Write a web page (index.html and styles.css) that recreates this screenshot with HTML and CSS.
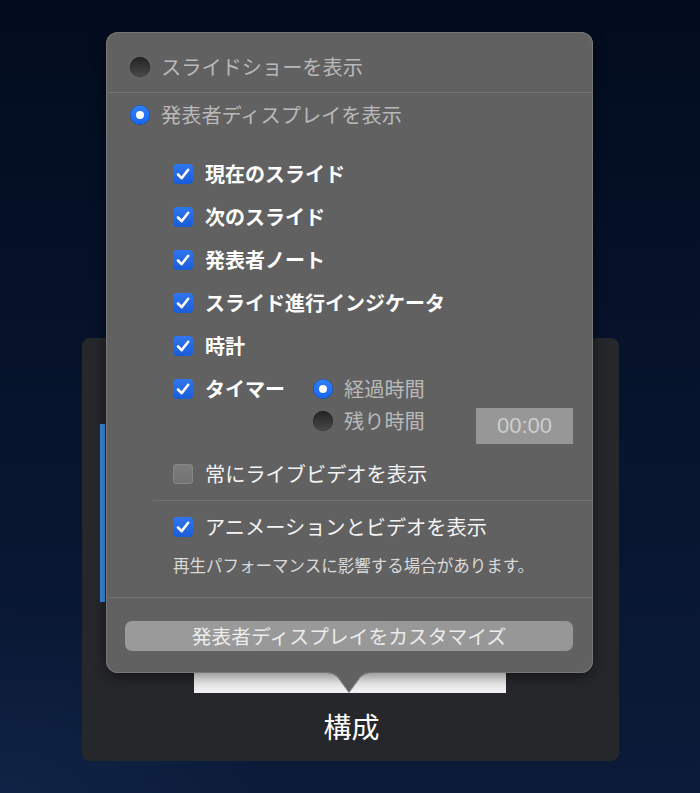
FILE: index.html
```html
<!DOCTYPE html>
<html lang="ja">
<head>
<meta charset="utf-8">
<title>発表者ディスプレイ</title>
<link rel="stylesheet" href="styles.css">
</head>
<body>
<div class="stage">
  <div class="panel">
    <div class="accent"></div>
    <div class="thumb"></div>
    <div class="caption">構成</div>
  </div>

  <div class="popover">
    <div class="sec-top">
      <div class="row radio-row">
        <span class="radio"></span><span class="lbl dim">スライドショーを表示</span>
      </div>
    </div>
    <div class="row radio-row row2">
      <span class="radio on"></span><span class="lbl dim">発表者ディスプレイを表示</span>
    </div>

    <div class="group">
      <div class="row chk-row"><span class="chk on"><svg viewBox="0 0 20 20"><path d="M5 10.5 8.6 14.2 15.2 5.8"/></svg></span><span class="lbl bold">現在のスライド</span></div>
      <div class="row chk-row"><span class="chk on"><svg viewBox="0 0 20 20"><path d="M5 10.5 8.6 14.2 15.2 5.8"/></svg></span><span class="lbl bold">次のスライド</span></div>
      <div class="row chk-row"><span class="chk on"><svg viewBox="0 0 20 20"><path d="M5 10.5 8.6 14.2 15.2 5.8"/></svg></span><span class="lbl bold">発表者ノート</span></div>
      <div class="row chk-row"><span class="chk on"><svg viewBox="0 0 20 20"><path d="M5 10.5 8.6 14.2 15.2 5.8"/></svg></span><span class="lbl bold">スライド進行インジケータ</span></div>
      <div class="row chk-row"><span class="chk on"><svg viewBox="0 0 20 20"><path d="M5 10.5 8.6 14.2 15.2 5.8"/></svg></span><span class="lbl bold">時計</span></div>

      <div class="timer">
        <div class="row chk-row timer-main"><span class="chk on"><svg viewBox="0 0 20 20"><path d="M5 10.5 8.6 14.2 15.2 5.8"/></svg></span><span class="lbl bold">タイマー</span></div>
        <div class="timer-opts">
          <div class="row opt-row"><span class="radio on"></span><span class="lbl dim">経過時間</span></div>
          <div class="row opt-row"><span class="radio"></span><span class="lbl dim">残り時間</span></div>
        </div>
        <div class="field">00:00</div>
      </div>

      <div class="row chk-row"><span class="chk off"></span><span class="lbl">常にライブビデオを表示</span></div>
    </div>

    <div class="sep-inset"></div>

    <div class="group2">
      <div class="row chk-row"><span class="chk on"><svg viewBox="0 0 20 20"><path d="M5 10.5 8.6 14.2 15.2 5.8"/></svg></span><span class="lbl">アニメーションとビデオを表示</span></div>
      <div class="note">再生パフォーマンスに影響する場合があります。</div>
    </div>

    <div class="sep-full"></div>

    <div class="btn">発表者ディスプレイをカスタマイズ</div>

    <svg class="arrow" viewBox="0 0 50 22" width="50" height="22">
      <path class="arrow-fill" d="M0 0 C6 0 10 1 14 5 L25 20 L36 5 C40 1 44 0 50 0 Z"/>
      <path class="arrow-line" d="M0 0.5 C6 0.5 10 1.5 14 5.5 L25 20.5 L36 5.5 C40 1.5 44 0.5 50 0.5"/>
    </svg>
  </div>
</div>
</body>
</html>
```

FILE: styles.css
```css
* { box-sizing: border-box; }

html, body {
  margin: 0;
  padding: 0;
}

body {
  width: 700px;
  height: 793px;
  overflow: hidden;
  font-family: "Noto Sans CJK JP", "Noto Sans", sans-serif;
  background:
    radial-gradient(ellipse 420px 260px at 0% 100%, rgba(30, 55, 100, 0.3), rgba(30, 55, 100, 0) 70%),
    linear-gradient(180deg, #030c1e 0%, #06132b 45%, #0b1b39 100%);
}

.stage {
  position: relative;
  width: 700px;
  height: 793px;
  padding-top: 338px;
  padding-left: 82px;
}

/* background panel */
.panel {
  position: relative;
  width: 537px;
  height: 423px;
  background: #26272b;
  border-radius: 8px;
  padding-top: 300px;
}

.accent {
  position: absolute;
  left: 18px;
  top: 86px;
  width: 5px;
  height: 178px;
  background: #3a8be0;
}

.thumb {
  margin-left: 112px;
  width: 312px;
  height: 55px;
  background: linear-gradient(180deg, #e4e4e4, #f2f2f2);
}

.caption {
  margin-top: 15px;
  text-align: center;
  color: #ffffff;
  font-size: 28px;
  line-height: 36px;
  padding-left: 2px;
}

/* popover */
.popover {
  position: absolute;
  left: 106px;
  top: 32px;
  width: 487px;
  height: 641px;
  background: #616161;
  border-radius: 12px;
  box-shadow: inset 0 0 0 1px #777777, 0 4px 14px rgba(0, 0, 0, 0.45);
}

.row {
  display: flex;
  align-items: center;
}

.lbl {
  font-size: 20.2px;
  line-height: 26px;
  white-space: nowrap;
  color: #f4f4f4;
}

.lbl.dim { color: #b9b9b9; }
.lbl.bold { font-weight: 700; color: #ffffff; font-size: 20px; }

.sec-top {
  padding-top: 10px;
  border-bottom: 1px solid #737373;
}

.radio-row {
  height: 50px;
  padding-left: 24px;
}

.radio-row .lbl { margin-left: 11px; }

.row2 { height: 44px; }

.radio {
  flex: none;
  width: 20px;
  height: 20px;
  border-radius: 50%;
  background: linear-gradient(180deg, #232323 0%, #3a3a3a 60%, #4a4a4a 100%);
  box-shadow: inset 0 0 0 0.5px rgba(0, 0, 0, 0.4);
  position: relative;
}

.radio.on {
  background: linear-gradient(180deg, #2f80ff, #1866f0);
}

.radio.on::after {
  content: "";
  position: absolute;
  left: 6px;
  top: 6px;
  width: 8px;
  height: 8px;
  border-radius: 50%;
  background: #ffffff;
}

.group {
  margin-top: 15.5px;
  padding-left: 67px;
}

.chk-row { height: 43px; }

.chk-row .lbl { margin-left: 12px; }

.chk {
  flex: none;
  width: 20px;
  height: 20px;
  border-radius: 4px;
  display: flex;
  align-items: center;
  justify-content: center;
}

.chk.on {
  background: linear-gradient(180deg, #2f76ee, #1a5cd8);
}

.chk.off {
  background: linear-gradient(180deg, #7d7d7d, #727272);
  box-shadow: inset 0 0 0 1px #858585;
}

.chk svg {
  width: 20px;
  height: 20px;
}

.chk svg path {
  fill: none;
  stroke: #ffffff;
  stroke-width: 2.6;
  stroke-linecap: round;
  stroke-linejoin: round;
}

.timer {
  display: flex;
  height: 85px;
}

.timer-main {
  width: 140px;
  align-self: flex-start;
}

.timer-opts {
  padding-top: 5.5px;
}

.opt-row { height: 32px; }

.opt-row .lbl { margin-left: 11px; }

.field {
  margin-left: auto;
  margin-right: 20px;
  margin-top: 40.5px;
  width: 97px;
  height: 36px;
  background: #979797;
  color: #cdcdcd;
  font-family: "Liberation Sans", "Noto Sans", sans-serif;
  font-size: 22px;
  line-height: 36px;
  text-align: center;
  align-self: flex-start;
}

.sep-inset {
  margin-top: 4.5px;
  margin-left: 47px;
  height: 1px;
  background: #737373;
}

.group2 {
  margin-top: 4px;
  padding-left: 67px;
}

.note {
  margin-top: 5.5px;
  font-size: 16.5px;
  line-height: 22px;
  color: #dadada;
  white-space: nowrap;
}

.sep-full {
  margin-top: 21px;
  height: 1px;
  background: #737373;
}

.btn {
  margin: 23px 0 0 19px;
  width: 448px;
  height: 30px;
  border-radius: 7px;
  background: linear-gradient(90deg, #9a9a9a, #979797);
  color: #ececec;
  font-size: 19.8px;
  line-height: 30px;
  text-align: center;
  white-space: nowrap;
}

.arrow {
  position: absolute;
  left: 218px;
  top: 640px;
  overflow: visible;
}

.arrow-fill { fill: #616161; }

.arrow-line {
  fill: none;
  stroke: #777777;
  stroke-width: 1;
}
```
